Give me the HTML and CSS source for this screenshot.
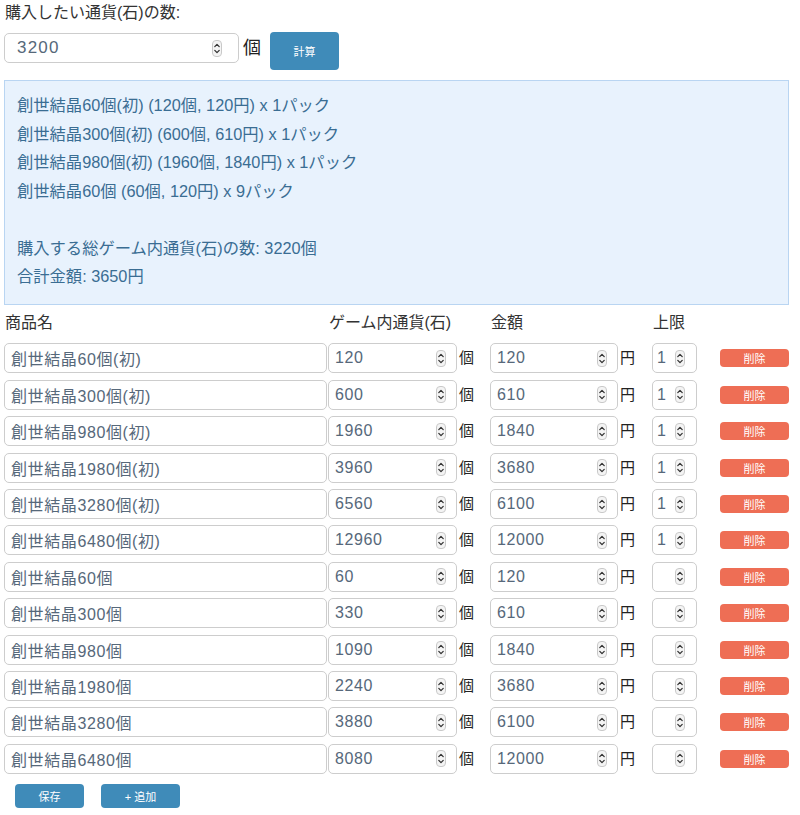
FILE: index.html
```html
<!DOCTYPE html>
<html lang="ja">
<head>
<meta charset="utf-8">
<title>通貨計算</title>
<link rel="stylesheet" href="styles.css">
</head>
<body>
<div class="page">
  <div class="title">購入したい通貨(石)の数:</div>
  <div class="calc-row">
    <div class="field field-main"><input class="num big" type="text" value="3200"><svg class="spin" viewBox="0 0 10 17" width="10" height="17"><rect x="0.5" y="0.5" width="9" height="16" rx="3.5" fill="#f4f4f4" stroke="#c9c9c9"/><path d="M2.8 6.6 L5 4.4 L7.2 6.6 M2.8 10.4 L5 12.6 L7.2 10.4" fill="none" stroke="#333" stroke-width="1.3" stroke-linecap="round" stroke-linejoin="round"/></svg></div>
    <span class="unit big-unit">個</span>
    <button class="btn btn-calc">計算</button>
  </div>
  <div class="result">
    <div class="line">創世結晶60個(初) (120個, 120円) x 1パック</div>
    <div class="line">創世結晶300個(初) (600個, 610円) x 1パック</div>
    <div class="line">創世結晶980個(初) (1960個, 1840円) x 1パック</div>
    <div class="line">創世結晶60個 (60個, 120円) x 9パック</div>
    <div class="line">&nbsp;</div>
    <div class="line">購入する総ゲーム内通貨(石)の数: 3220個</div>
    <div class="line">合計金額: 3650円</div>
  </div>
  <div class="grid" id="grid">
    <div class="head">商品名</div>
    <div class="head">ゲーム内通貨(石)</div>
    <div class="head"></div>
    <div class="head">金額</div>
    <div class="head"></div>
    <div class="head">上限</div>
    <div class="head"></div>
  </div>
  <div class="actions">
    <button class="btn btn-small btn-save">保存</button>
    <button class="btn btn-small btn-add">+ 追加</button>
  </div>
</div>
<script src="app.js"></script>
</body>
</html>
```
FILE: styles.css
```css
* { box-sizing: border-box; }
html, body { margin: 0; padding: 0; background: #fff; }
body {
  font-family: "Liberation Sans", "Noto Sans CJK JP", sans-serif;
  color: #333;
}
.page { padding: 0 11px 0 4px; width: 800px; }
.title { font-size: 16px; line-height: 24px; margin-top: 1px; padding-left: 1px; }
.calc-row { display: flex; align-items: flex-start; margin-top: 7px; }
.field {
  display: flex; align-items: center;
  border: 1px solid #cdcdcd; border-radius: 5px; background: #fff;
  height: 30px; padding-right: 10px;
}
.field input {
  border: 0; outline: none; background: transparent; flex: 1; min-width: 0;
  font-family: "Liberation Sans", "Noto Sans CJK JP", sans-serif;
  font-size: 16px; letter-spacing: 0.6px; color: #56687a; padding: 0 0 0 6px; height: 100%;
}
.field-main { width: 235px; margin-top: 1px; padding-right: 16px; }
.field-main input.big { font-size: 17px; padding-left: 12px; letter-spacing: 1.2px; }
.spin { flex: none; display: block; }
.unit { font-size: 15px; line-height: 30px; padding-left: 2px; color: #222; }
.big-unit { font-size: 18px; line-height: 30px; margin-left: 2px; margin-top: 1px; }
.btn {
  border: 0; color: #fff; font-family: "Liberation Sans", "Noto Sans CJK JP", sans-serif;
  border-radius: 4px; padding: 0; cursor: pointer;
}
.btn-calc { background: #3f8bb9; width: 69px; height: 38px; font-size: 11px; margin-left: 9px; }
.result {
  margin-top: 10px; background: #e8f2fd; border: 1px solid #b9d5f2;
  padding: 10px 12px 13px 12px; color: #3a6d93; font-size: 16.3px;
}
.result .line { line-height: 28.5px; height: 28.5px; }
.grid {
  display: grid;
  grid-template-columns: 324px 129px 33px 128px 34px 68px 69px;
  row-gap: 6.4px; margin-top: 7px;
}
.head { font-size: 16px; line-height: 22px; margin-bottom: 3.6px; padding-left: 1px; }
.grid .field { width: 100%; }
.grid .field-name { width: 323px; padding-right: 0; }
.grid .field-limit { width: 45px; padding-right: 11px; }
.grid .field-limit input { padding-left: 4px; }
.del {
  align-self: center; background: #ee6e55; height: 18px; width: 69px; font-size: 11px;
  border-radius: 4px;
}
.actions { display: flex; gap: 17px; margin-top: 10px; padding-left: 11px; }
.btn-small { background: #3f8bb9; height: 24px; font-size: 11px; }
.btn-save { width: 69px; }
.btn-add { width: 79px; }
```
FILE: app.js
```js
var rows = [
  ["創世結晶60個(初)", 120, 120, 1],
  ["創世結晶300個(初)", 600, 610, 1],
  ["創世結晶980個(初)", 1960, 1840, 1],
  ["創世結晶1980個(初)", 3960, 3680, 1],
  ["創世結晶3280個(初)", 6560, 6100, 1],
  ["創世結晶6480個(初)", 12960, 12000, 1],
  ["創世結晶60個", 60, 120, ""],
  ["創世結晶300個", 330, 610, ""],
  ["創世結晶980個", 1090, 1840, ""],
  ["創世結晶1980個", 2240, 3680, ""],
  ["創世結晶3280個", 3880, 6100, ""],
  ["創世結晶6480個", 8080, 12000, ""]
];
var spin = '<svg class="spin" viewBox="0 0 10 17" width="10" height="17"><rect x="0.5" y="0.5" width="9" height="16" rx="3.5" fill="#f4f4f4" stroke="#c9c9c9"/><path d="M2.8 6.6 L5 4.4 L7.2 6.6 M2.8 10.4 L5 12.6 L7.2 10.4" fill="none" stroke="#333" stroke-width="1.3" stroke-linecap="round" stroke-linejoin="round"/></svg>';
var grid = document.getElementById("grid");
var html = "";
rows.forEach(function (r) {
  html += '<div><div class="field field-name"><input type="text" value="' + r[0] + '"></div></div>';
  html += '<div class="field"><input type="text" value="' + r[1] + '">' + spin + '</div>';
  html += '<span class="unit">個</span>';
  html += '<div class="field"><input type="text" value="' + r[2] + '">' + spin + '</div>';
  html += '<span class="unit">円</span>';
  html += '<div><div class="field field-limit"><input type="text" value="' + r[3] + '">' + spin + '</div></div>';
  html += '<button class="btn del">削除</button>';
});
grid.insertAdjacentHTML("beforeend", html);
```
